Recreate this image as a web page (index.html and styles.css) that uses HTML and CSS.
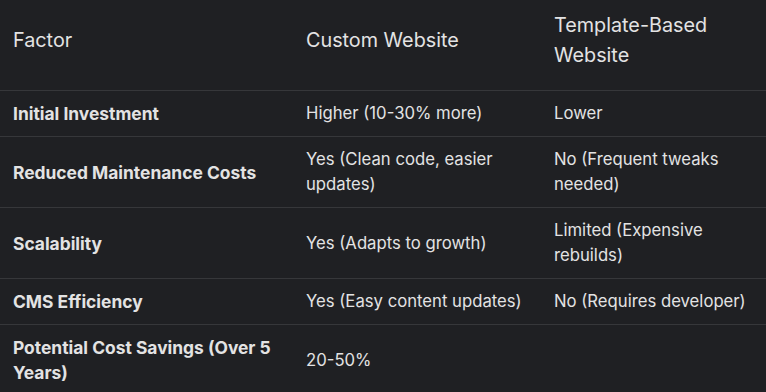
FILE: index.html
```html
<!DOCTYPE html>
<html>
<head>
<meta charset="utf-8">
<link rel="stylesheet" href="styles.css">
</head>
<body>
<table class="cmp">
  <colgroup>
    <col class="c1"><col class="c2"><col class="c3">
  </colgroup>
  <thead>
    <tr><th>Factor</th><th>Custom Website</th><th>Template-Based Website</th></tr>
  </thead>
  <tbody>
    <tr><td class="f">Initial Investment</td><td>Higher (10-30% more)</td><td>Lower</td></tr>
    <tr><td class="f">Reduced Maintenance Costs</td><td>Yes (Clean code, easier updates)</td><td>No (Frequent tweaks needed)</td></tr>
    <tr><td class="f">Scalability</td><td>Yes (Adapts to growth)</td><td>Limited (Expensive rebuilds)</td></tr>
    <tr><td class="f">CMS Efficiency</td><td>Yes (Easy content updates)</td><td>No (Requires developer)</td></tr>
    <tr class="last"><td class="f">Potential Cost Savings (Over 5 Years)</td><td>20-50%</td><td></td></tr>
  </tbody>
</table>
</body>
</html>
```
FILE: styles.css
```css
html, body {
  margin: 0;
  background: #1f2023;
}
body {
  width: 766px;
  height: 392px;
  overflow: hidden;
  font-family: Inter, Roboto, sans-serif;
  color: #e3e3e3;
}
.cmp {
  width: 766px;
  border-collapse: collapse;
  table-layout: fixed;
}
.c1 { width: 293px; }
.c2 { width: 248px; }
.c3 { width: 225px; }
th {
  font-weight: 400;
  font-size: 19.8px;
  line-height: 30px;
  text-align: left;
  padding: 10px 13px 20px;
  border-bottom: 1px solid #36373a;
}
td {
  font-size: 16.7px;
  line-height: 25px;
  padding: 10px 13px;
  vertical-align: middle;
  border-bottom: 1px solid #36373a;
}
td.f {
  font-weight: 700;
  font-size: 17.4px;
}
tr.last td {
  border-bottom: none;
}
```
